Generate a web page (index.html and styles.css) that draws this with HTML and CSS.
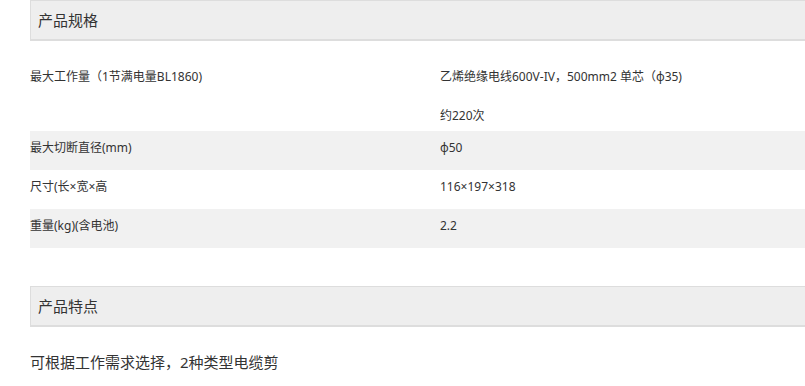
FILE: index.html
```html
<!DOCTYPE html>
<html lang="zh-CN">
<head>
<meta charset="utf-8">
<title>产品规格</title>
<link rel="stylesheet" href="styles.css">
</head>
<body>
<div class="page">
  <section class="section">
    <h2 class="section-title">产品规格</h2>
    <div class="spec">
      <div class="row row-tall">
        <div class="label">最大工作量（1节满电量BL1860)</div>
        <div class="value">
          <p>乙烯绝缘电线600V-IV，500mm2 单芯（φ35)</p>
          <p>约220次</p>
        </div>
      </div>
      <div class="row row-alt">
        <div class="label">最大切断直径(mm)</div>
        <div class="value"><p>φ50</p></div>
      </div>
      <div class="row">
        <div class="label">尺寸(长×宽×高</div>
        <div class="value"><p>116×197×318</p></div>
      </div>
      <div class="row row-alt">
        <div class="label">重量(kg)(含电池)</div>
        <div class="value"><p>2.2</p></div>
      </div>
    </div>
  </section>
  <section class="section section-features">
    <h2 class="section-title">产品特点</h2>
    <p class="feature-text">可根据工作需求选择，2种类型电缆剪</p>
  </section>
</div>
</body>
</html>
```

FILE: styles.css
```css
html, body {
  margin: 0;
  padding: 0;
  background: #fff;
  overflow: hidden;
}

body {
  font-family: "Noto Sans", "Noto Sans CJK SC", sans-serif;
  color: #333;
}

.page {
  padding-left: 30px;
  width: 800px;
}

.section-title {
  margin: 0;
  height: 38px;
  line-height: 38px;
  padding-left: 7px;
  font-size: 15px;
  font-weight: normal;
  color: #333;
  background: #eeeeee;
  border-top: 1px solid #dddddd;
  border-left: 1px solid #dddddd;
  border-bottom: 2px solid #dddddd;
}

.spec {
  margin-top: 19px;
}

.row {
  display: grid;
  grid-template-columns: 410px 1fr;
  height: 39px;
  box-sizing: border-box;
  padding-top: 7px;
  font-size: 12px;
  line-height: 20px;
  color: #333;
}

.row-tall {
  height: 71px;
}

.row-alt {
  background: #f1f1f1;
}

.value p {
  margin: 0;
}

.value p + p {
  margin-top: 19px;
}

.section-features {
  margin-top: 38px;
}

.feature-text {
  margin: 25px 0 0;
  font-size: 15px;
  line-height: 20px;
  color: #333;
}
```
